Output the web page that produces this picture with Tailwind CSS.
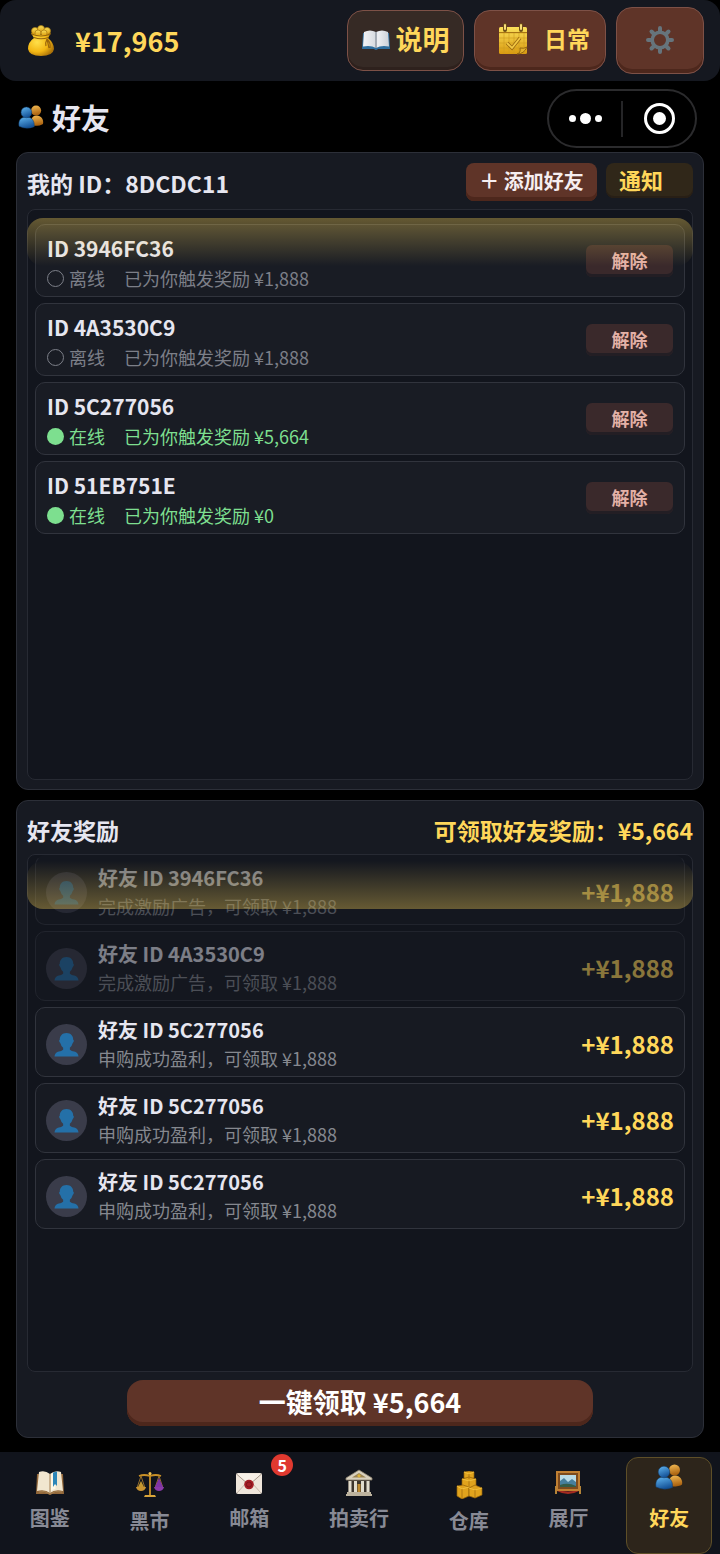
<!DOCTYPE html>
<html lang="zh-CN">
<head>
    <meta charset="UTF-8">
    <meta name="viewport" content="width=device-width, initial-scale=1.0">
    <title>好友</title>
    <script src="https://cdn.jsdelivr.net/npm/@tailwindcss/browser@4"></script>
</head>
<body class="bg-black text-[#e6e6f0] font-['Noto_Sans_CJK_SC',sans-serif] min-h-screen flex flex-col">

    <!-- Shared icons -->
    <svg class="absolute size-0" aria-hidden="true">
        <defs>
            <linearGradient id="blue" x1="0" y1="0" x2="0.4" y2="1"><stop offset="0" stop-color="#63b8f2"/><stop offset="1" stop-color="#155398"/></linearGradient>
            <linearGradient id="orange" x1="0" y1="0" x2="0.2" y2="1"><stop offset="0" stop-color="#f5bd55"/><stop offset="1" stop-color="#a9610f"/></linearGradient>
            <linearGradient id="gold" x1="0" y1="0" x2="0" y2="1"><stop offset="0" stop-color="#fbe05a"/><stop offset="1" stop-color="#d99a10"/></linearGradient>
            <radialGradient id="bag" cx="0.35" cy="0.4" r="0.7"><stop offset="0" stop-color="#ffe04a"/><stop offset="0.6" stop-color="#f3b714"/><stop offset="1" stop-color="#a97009"/></radialGradient>
            <linearGradient id="page" x1="0" y1="0" x2="1" y2="0"><stop offset="0" stop-color="#f3f4f6"/><stop offset="0.45" stop-color="#d9dde2"/><stop offset="0.5" stop-color="#9aa3ad"/><stop offset="0.56" stop-color="#eef0f3"/><stop offset="1" stop-color="#ccd1d8"/></linearGradient>
        </defs>
        <symbol id="icon-friends" viewBox="0 0 28 26">
            <path d="M14 22.500C13 17 15 11.500 20 11.500S28 16 27 20.500Q24 23 14 22.500Z" fill="url(#orange)"/>
            <circle cx="19.500" cy="6" r="5.500" fill="url(#orange)"/>
            <path d="M1 23C0 16.500 3 13 9 13S18 17 17.500 23.500Q9 27 1 23Z" fill="url(#blue)" stroke="#123c68" stroke-width=".5"/>
            <circle cx="9" cy="8" r="5.800" fill="url(#blue)" stroke="#123c68" stroke-width=".5"/>
        </symbol>
        <symbol id="icon-person" viewBox="0 0 26 26">
            <path d="M13 1C17.500 1 20 4 20 8Q21.500 9 19.500 11.500Q18.500 15 16.500 16.500V18.500Q18 20 22 20.500Q25 21.500 25.500 25.500H.5Q1 21.500 4 20.500Q8 20 9.500 18.500V16.500Q7.500 15 6.500 11.500Q4.500 9 6 8C6 4 8.500 1 13 1Z" fill="#2470a8"/>
        </symbol>
    </svg>

    <header class="h-[81px] bg-[#151820] rounded-2xl flex items-center justify-between pl-[27px] pr-4">
        <div class="flex items-center gap-5">
            <svg class="w-7 h-8" viewBox="0 0 28 32" aria-hidden="true">
                <g fill="url(#gold)" stroke="#a97a10" stroke-width=".7"><circle cx="8" cy="6" r="3.500"/><circle cx="14" cy="4" r="3.500"/><circle cx="20" cy="6" r="3.500"/><circle cx="11" cy="8" r="3"/><circle cx="17" cy="8" r="3"/></g>
                <path d="M4 8Q14 12 24 8L21 13Q27 18 27 24Q26 31 14 31T1 24Q1 17 7 13Z" fill="url(#bag)"/>
                <path d="M4.500 9Q14 13 23.500 9M7 12.500Q14 15 21.500 12.500" fill="none" stroke="#936410" stroke-width="1.200"/>
                <path d="M20 14Q24 18 23 23M20 14Q18 18 19 21M20 14L22 23" fill="none" stroke="#9a650b" stroke-width="1.200"/>
            </svg>
            <span class="text-[27px] leading-9 font-bold text-[#ffd75a]">¥17,965</span>
        </div>
        <div class="flex items-center gap-2.5">
            <button class="h-[61px] w-[117px] flex items-center justify-center gap-1.5 pb-0.5 rounded-2xl border border-[#7d5147] bg-[#362a25] shadow-[inset_0_-3px_0_#2e211d] text-[27px] font-bold text-[#ffd75a]">
                <svg class="w-7 h-5" viewBox="0 0 28 20" aria-hidden="true">
                    <path d="M1 3H27L28 19H16Q14 21 12 19H0Z" fill="#2f6f9f"/>
                    <path d="M2 2Q8-1 14 2Q20-1 26 2L27 16.500Q19 15 14 18Q9 15 1 16.500Z" fill="url(#page)"/>
                    <path d="M14 2V18" stroke="#87919c" stroke-width=".7"/>
                </svg>
                说明
            </button>
            <button class="h-[61px] w-[132px] flex items-center justify-center gap-4 pl-2 pb-1 rounded-2xl border border-[#7d5147] bg-[#5f3428] shadow-[inset_0_-3px_0_#4d271c] text-[23px] font-bold text-[#ffd75a]">
                <svg class="w-[30px] h-8" viewBox="0 0 30 32" aria-hidden="true">
                    <rect x="1" y="4" width="28" height="27" rx="1.500" fill="url(#gold)"/>
                    <path d="M1 10H29M6 10V31M11 10V31M16 10V31M21 10V31M26 10V31M1 15H29M1 20H29M1 25H29" stroke="#cf9b20" stroke-width=".6"/>
                    <path d="M1 9.500H29" stroke="#a87514"/>
                    <path d="M9 20L14 25L22 15" fill="none" stroke="#9d6b12" stroke-width="3.500"/>
                    <path d="M9 20L14 25L22 15" fill="none" stroke="#f3c944" stroke-width="1.800"/>
                    <path d="M19 31Q23 30 22 25Q26 26 29 24Q26 31 19 31Z" fill="#e3b02d" stroke="#8f6110" stroke-width=".9"/>
                    <path d="M7 2V7M23 2V7" stroke="#6b4d18" stroke-width="4" stroke-linecap="round"/>
                    <path d="M7 2V6M23 2V6" stroke="#f7dc7a" stroke-width="2" stroke-linecap="round"/>
                </svg>
                日常
            </button>
            <button aria-label="设置" class="h-[67px] w-[88px] flex items-center justify-center pb-0.5 rounded-2xl border border-[#7d5147] bg-[#5f3428] shadow-[inset_0_-4px_0_#4d271c]">
                <svg class="w-7 h-7" viewBox="0 0 28 28" aria-hidden="true">
                    <path d="M14 2V26M2 14H26M5.500 5.500L22.500 22.500M22.500 5.500L5.500 22.500" stroke="#66747c" stroke-width="4" stroke-linecap="round"/>
                    <circle cx="14" cy="14" r="7.800" fill="#5f3428" stroke="#66747c" stroke-width="3.600"/>
                </svg>
            </button>
        </div>
    </header>

    <main class="flex-1 flex flex-col px-4 pb-3.5">
        <div class="flex items-center justify-between pt-2 pb-1 pr-[7px]">
            <h1 class="flex items-center gap-2 pl-0.5 pb-1 text-[29px] leading-10 font-bold">
                <svg class="w-[26px] h-6" aria-hidden="true"><use href="#icon-friends"/></svg>
                好友
            </h1>
            <div class="h-[59px] w-[150px] flex items-center rounded-full border-2 border-[#2b2b2d]">
                <button aria-label="更多" class="flex-1 flex items-center justify-center gap-1">
                    <span class="size-[7px] rounded-full bg-white"></span>
                    <span class="size-[11px] rounded-full bg-white"></span>
                    <span class="size-[7px] rounded-full bg-white"></span>
                </button>
                <span class="h-9 w-0.5 bg-[#252527]"></span>
                <button aria-label="关闭" class="flex-1 flex items-center justify-center">
                    <span class="size-[31px] rounded-full border-[3px] border-white flex items-center justify-center">
                        <span class="size-[13px] rounded-full bg-white"></span>
                    </span>
                </button>
            </div>
        </div>

        <div class="flex-1 grid grid-rows-2 gap-2.5">
            <!-- Friend list -->
            <section class="flex flex-col rounded-xl border border-[#2c2f38] bg-[#171a22] px-2.5 pb-[9px]">
                <div class="h-14 flex items-start justify-between pt-2.5">
                    <h2 class="text-[23px] leading-10 font-bold">我的 ID：8DCDC11</h2>
                    <div class="flex items-start gap-[9px]">
                        <button class="h-[38px] w-[131px] pb-0.5 rounded-lg bg-[#5f3428] shadow-[inset_0_-4px_0_#4d271c] text-xl leading-7 font-bold text-[#f6eef0]">＋ 添加好友</button>
                        <button class="h-[35px] w-[87px] pl-[13px] pb-1 rounded-lg bg-[#302719] shadow-[inset_0_-2px_0_#281f16] text-left text-[22px] leading-7 font-bold text-[#ffd75a]">通知</button>
                    </div>
                </div>
                <div class="relative flex-1 rounded-lg border border-[#272a33] bg-[#12151d] px-[7px] pt-3.5 pb-2">
                    <ul class="flex flex-col gap-1.5">
                        <li class="flex items-center justify-between rounded-[10px] border border-[#31343d] bg-[#191c24] px-[11px] pt-2 pb-[3px]">
                            <div>
                                <p class="text-[21px] leading-[30px] font-bold">ID 3946FC36</p>
                                <p class="flex items-center text-lg leading-[30px] text-[#7c7f88]"><span class="size-[17px] mr-[5px] rounded-full border border-[#7c7f88]"></span>离线<span class="ml-[19px]">已为你触发奖励 ¥1,888</span></p>
                            </div>
                            <button class="h-8 w-[87px] mb-1 pb-0.5 rounded-md bg-[#3a292b] shadow-[inset_0_-3px_0_#231e24] text-lg leading-7 font-bold text-[#e3b0a6]">解除</button>
                        </li>
                        <li class="flex items-center justify-between rounded-[10px] border border-[#31343d] bg-[#191c24] px-[11px] pt-2 pb-[3px]">
                            <div>
                                <p class="text-[21px] leading-[30px] font-bold">ID 4A3530C9</p>
                                <p class="flex items-center text-lg leading-[30px] text-[#7c7f88]"><span class="size-[17px] mr-[5px] rounded-full border border-[#7c7f88]"></span>离线<span class="ml-[19px]">已为你触发奖励 ¥1,888</span></p>
                            </div>
                            <button class="h-8 w-[87px] mb-1 pb-0.5 rounded-md bg-[#3a292b] shadow-[inset_0_-3px_0_#231e24] text-lg leading-7 font-bold text-[#e3b0a6]">解除</button>
                        </li>
                        <li class="flex items-center justify-between rounded-[10px] border border-[#31343d] bg-[#191c24] px-[11px] pt-2 pb-[3px]">
                            <div>
                                <p class="text-[21px] leading-[30px] font-bold">ID 5C277056</p>
                                <p class="flex items-center text-lg leading-[30px] text-[#7ddf8f]"><span class="size-[17px] mr-[5px] rounded-full bg-[#7ddf8f]"></span>在线<span class="ml-[19px]">已为你触发奖励 ¥5,664</span></p>
                            </div>
                            <button class="h-8 w-[87px] mb-1 pb-0.5 rounded-md bg-[#3a292b] shadow-[inset_0_-3px_0_#231e24] text-lg leading-7 font-bold text-[#e3b0a6]">解除</button>
                        </li>
                        <li class="flex items-center justify-between rounded-[10px] border border-[#31343d] bg-[#191c24] px-[11px] pt-2 pb-[3px]">
                            <div>
                                <p class="text-[21px] leading-[30px] font-bold">ID 51EB751E</p>
                                <p class="flex items-center text-lg leading-[30px] text-[#7ddf8f]"><span class="size-[17px] mr-[5px] rounded-full bg-[#7ddf8f]"></span>在线<span class="ml-[19px]">已为你触发奖励 ¥0</span></p>
                            </div>
                            <button class="h-8 w-[87px] mb-1 pb-0.5 rounded-md bg-[#3a292b] shadow-[inset_0_-3px_0_#231e24] text-lg leading-7 font-bold text-[#e3b0a6]">解除</button>
                        </li>
                    </ul>
                    <!-- scroll edge glow -->
                    <div class="absolute -inset-x-px top-2 h-12 rounded-2xl bg-linear-to-b from-[#ffd75a]/35 to-[#ffd75a]/0 pointer-events-none"></div>
                </div>
            </section>

            <!-- Friend rewards -->
            <section class="flex flex-col rounded-xl border border-[#2c2f38] bg-[#171a22] px-2.5 pb-[11px]">
                <div class="h-[53px] flex items-center justify-between pt-1 text-[23px] leading-10 font-bold">
                    <h2>好友奖励</h2>
                    <p class="text-[#ffd75a]">可领取好友奖励：¥5,664</p>
                </div>
                <div class="relative flex-1 rounded-lg border border-[#272a33] bg-[#12151d] px-[7px] pb-2">
                    <ul class="flex flex-col gap-1.5">
                        <li class="flex items-center rounded-[10px] border border-[#31343d] border-t-transparent bg-[#171a22] px-2.5 pt-2 pb-1 gap-[11px] opacity-50">
                            <span class="size-[41px] rounded-full bg-[#3a3c4a] flex items-center justify-center"><svg class="size-[25px]" aria-hidden="true"><use href="#icon-person"/></svg></span>
                            <div class="flex-1">
                                <p class="text-xl leading-7 font-bold">好友 ID 3946FC36</p>
                                <p class="text-lg leading-7 text-[#85888f]">完成激励广告，可领取 ¥1,888</p>
                            </div>
                            <span class="text-2xl leading-8 font-bold text-[#ffd75a]">+¥1,888</span>
                        </li>
                        <li class="flex items-center rounded-[10px] border border-[#31343d] bg-[#171a22] px-2.5 pt-2 pb-1 gap-[11px] opacity-50">
                            <span class="size-[41px] rounded-full bg-[#3a3c4a] flex items-center justify-center"><svg class="size-[25px]" aria-hidden="true"><use href="#icon-person"/></svg></span>
                            <div class="flex-1">
                                <p class="text-xl leading-7 font-bold">好友 ID 4A3530C9</p>
                                <p class="text-lg leading-7 text-[#85888f]">完成激励广告，可领取 ¥1,888</p>
                            </div>
                            <span class="text-2xl leading-8 font-bold text-[#ffd75a]">+¥1,888</span>
                        </li>
                        <li class="flex items-center rounded-[10px] border border-[#31343d] bg-[#171a22] px-2.5 pt-2 pb-1 gap-[11px]">
                            <span class="size-[41px] rounded-full bg-[#3a3c4a] flex items-center justify-center"><svg class="size-[25px]" aria-hidden="true"><use href="#icon-person"/></svg></span>
                            <div class="flex-1">
                                <p class="text-xl leading-7 font-bold">好友 ID 5C277056</p>
                                <p class="text-lg leading-7 text-[#85888f]">申购成功盈利，可领取 ¥1,888</p>
                            </div>
                            <span class="text-2xl leading-8 font-bold text-[#ffd75a]">+¥1,888</span>
                        </li>
                        <li class="flex items-center rounded-[10px] border border-[#31343d] bg-[#171a22] px-2.5 pt-2 pb-1 gap-[11px]">
                            <span class="size-[41px] rounded-full bg-[#3a3c4a] flex items-center justify-center"><svg class="size-[25px]" aria-hidden="true"><use href="#icon-person"/></svg></span>
                            <div class="flex-1">
                                <p class="text-xl leading-7 font-bold">好友 ID 5C277056</p>
                                <p class="text-lg leading-7 text-[#85888f]">申购成功盈利，可领取 ¥1,888</p>
                            </div>
                            <span class="text-2xl leading-8 font-bold text-[#ffd75a]">+¥1,888</span>
                        </li>
                        <li class="flex items-center rounded-[10px] border border-[#31343d] bg-[#171a22] px-2.5 pt-2 pb-1 gap-[11px]">
                            <span class="size-[41px] rounded-full bg-[#3a3c4a] flex items-center justify-center"><svg class="size-[25px]" aria-hidden="true"><use href="#icon-person"/></svg></span>
                            <div class="flex-1">
                                <p class="text-xl leading-7 font-bold">好友 ID 5C277056</p>
                                <p class="text-lg leading-7 text-[#85888f]">申购成功盈利，可领取 ¥1,888</p>
                            </div>
                            <span class="text-2xl leading-8 font-bold text-[#ffd75a]">+¥1,888</span>
                        </li>
                    </ul>
                    <!-- scroll edge glow -->
                    <div class="absolute -inset-x-px top-1.5 h-12 rounded-2xl bg-linear-to-t from-[#ffd75a]/35 to-[#ffd75a]/0 pointer-events-none"></div>
                </div>
                <button class="self-center mt-2 h-[46px] w-7/10 pb-0.5 rounded-2xl bg-[#5f3428] shadow-[inset_0_-4px_0_#4d271c] text-[27px] leading-9 font-bold text-white">一键领取 ¥5,664</button>
            </section>
        </div>
    </main>

    <nav class="h-[102px] bg-[#11141c] flex gap-4 px-2 pt-[5px] text-xl leading-7 font-bold text-[#888a95]">
        <a href="#" class="flex-auto flex flex-col items-center gap-[7px] pt-3">
            <svg class="size-7" viewBox="0 0 28 28" aria-hidden="true">
                <path d="M1 5H27L28 25H16Q14 27 12 25H0Z" fill="#93683a"/>
                <path d="M3 3Q9 1 14 5Q19 1 25 3L27 22Q19 20 14 24Q9 20 1 22Z" fill="#f1e6cf"/>
                <path d="M15 5Q17 3 19.500 3V20Q17 20 15 22Z" fill="#fff8e7"/>
                <path d="M17 3.500L21 2.500V17L19 15L17 18Z" fill="#2d86b8"/>
                <path d="M14 5V24M3 23Q9 21 14 25Q19 21 26 23" fill="none" stroke="#a58152" stroke-width="1"/>
            </svg>
            图鉴
        </a>
        <a href="#" class="flex-auto flex flex-col items-center gap-2 pt-3.5">
            <svg class="size-7" viewBox="0 0 28 28" aria-hidden="true">
                <path d="M14 2V25M3 5Q8 3 14 5Q20 3 25 5" fill="none" stroke="#c99027" stroke-width="1.800"/>
                <circle cx="14" cy="2.500" r="1.500" fill="#f1c04c"/>
                <path d="M5 5L1 17M5 5L9 17M23 5L19 17M23 5L27 17" stroke="#a0762b" stroke-width=".9"/>
                <path d="M2 16L5 10L8 16Z" fill="#c4972f"/><path d="M19 16L23 7L27 16Z" fill="#7f34a8"/>
                <path d="M0 16H10Q9 20 5 20T0 16Z" fill="#c99330"/><path d="M18 16H28Q27 20 23 20T18 16Z" fill="#8a3aaa"/>
                <path d="M9 24H19L20 26H8Z" fill="#d9a53a"/>
            </svg>
            黑市
        </a>
        <a href="#" class="flex-auto flex flex-col items-center gap-[7px] pt-3">
            <span class="relative">
                <svg class="size-7" viewBox="0 0 28 28" aria-hidden="true">
                    <rect x="1" y="4" width="26" height="21" rx="2" fill="#efe6db"/>
                    <path d="M2 24L11 14M26 24L17 14" stroke="#c7b9aa" stroke-width="1"/>
                    <path d="M1.500 5L14 16L26.500 5" fill="#f7f0e7" stroke="#a89a8b" stroke-width="1"/>
                    <circle cx="14" cy="15.500" r="4.800" fill="#a51d25"/><circle cx="14" cy="15.500" r="2.600" fill="none" stroke="#7c1019"/>
                </svg>
                <span class="absolute -top-[15px] -right-[30px] size-[22px] rounded-full bg-[#e0392f] text-white text-base leading-[22px] text-center">5</span>
            </span>
            邮箱
        </a>
        <a href="#" class="flex-auto flex flex-col items-center gap-[7px] pt-3">
            <svg class="size-7" viewBox="0 0 28 28" aria-hidden="true">
                <rect x="3" y="9" width="22" height="15" fill="#3c352c"/>
                <path d="M14 1L27 9V11H1V9Z" fill="#d8d0bd" stroke="#897f6c" stroke-width=".8"/>
                <path d="M14 4L21 8.500H7Z" fill="#9b8453"/><circle cx="14" cy="6.800" r="1.600" fill="#ddb23b"/>
                <path d="M5 12V23M10.500 12V23M17.500 12V23M23 12V23" stroke="#e1dccd" stroke-width="3"/>
                <rect x="12.500" y="15" width="3" height="8" fill="#be8b32"/>
                <path d="M2 23H26V25H27V27H1V25H2Z" fill="#bdb39e"/>
            </svg>
            拍卖行
        </a>
        <a href="#" class="flex-auto flex flex-col items-center gap-2 pt-3.5">
            <svg class="size-7" viewBox="0 0 28 28" aria-hidden="true">
                <g fill="#e0a31d" stroke="#93610a" stroke-width=".7">
                    <path d="M9 1L14 0L19 1V7L14 9L9 7Z"/><path d="M7 8L14 6L21 8V15L14 17L7 15Z"/><path d="M2 15L8 14L14 16V25L7 28L2 25Z"/><path d="M14 17L20 14L27 17V24L20 27L14 25Z"/>
                </g>
                <path d="M9 1L14 3L19 1M7 8L14 10L21 8M2 15L7 18L14 16M14 17L20 19L27 17" fill="none" stroke="#f0be3c"/>
                <path d="M14 3V8M14 10V16M7 18V27M20 19V27" stroke="#a46d0d" stroke-width=".8"/>
            </svg>
            仓库
        </a>
        <a href="#" class="flex-auto flex flex-col items-center gap-[7px] pt-3">
            <svg class="size-7" viewBox="0 0 28 28" aria-hidden="true">
                <path d="M2 22V17M26 22V17M2 25V19M26 25V19" stroke="#c6913c" stroke-width="1.800"/>
                <path d="M3 20Q14 25 25 20V22Q14 28 3 22Z" fill="#a42a20"/>
                <rect x="3" y="3" width="22" height="18" fill="#7d4b1e" stroke="#c08033" stroke-width="2"/>
                <rect x="6" y="6" width="16" height="12" fill="#b9dbe6"/>
                <path d="M6 12L10 9L14 13L18 10L22 13V18H6Z" fill="#477f9d"/><path d="M6 16Q14 13 22 17V18H6Z" fill="#355c46"/>
            </svg>
            展厅
        </a>
        <a href="#" aria-current="page" class="flex-auto flex flex-col items-center gap-3.5 pt-1.5 rounded-xl border border-[#5e4f28] bg-[#2d251b] text-[#ffd75a]">
            <svg class="w-7 h-[26px]" aria-hidden="true"><use href="#icon-friends"/></svg>
            好友
        </a>
    </nav>
</body>
</html>
